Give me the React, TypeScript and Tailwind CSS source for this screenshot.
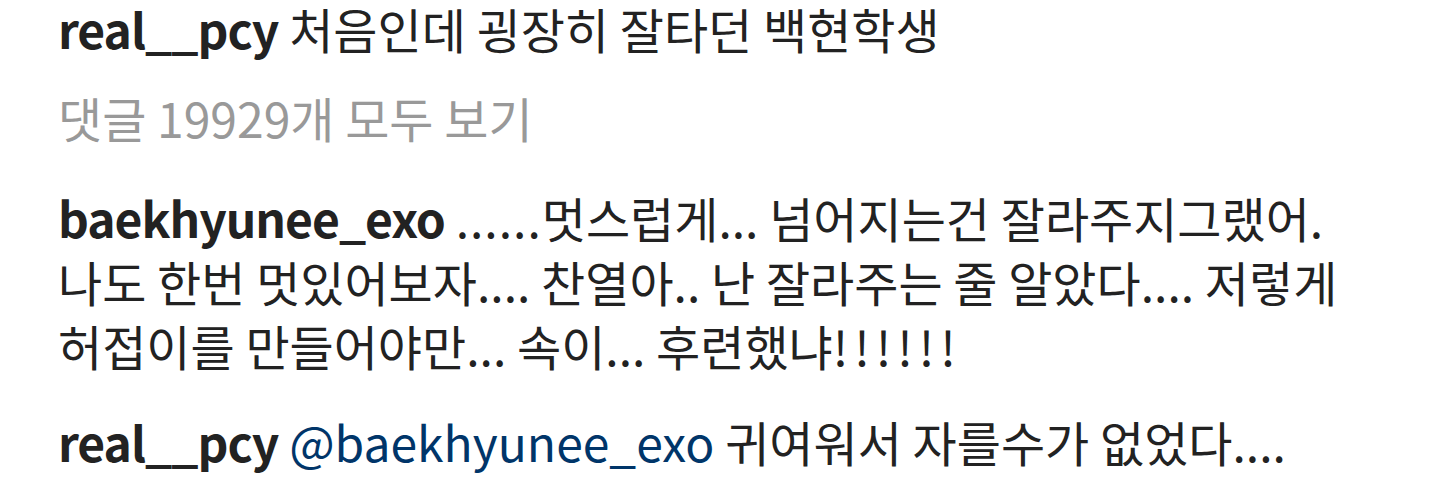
export default function App() {
  const font = { fontFamily: '"Noto Sans CJK KR", "Noto Sans", sans-serif' };
  return (
    <div className="w-[1440px] h-[480px] bg-white overflow-hidden text-[#222222]" style={font}>
      <div className="pl-[58px] pr-[40px] text-[48px] leading-[64px] break-keep">
        <p className="-mt-[4px]">
          <span className="font-bold tracking-[-1px]">real__pcy</span> 처음인데 굉장히 잘타던 백현학생
        </p>
        <p className="mt-[25px] text-[#999999]">댓글 19929개 모두 보기</p>
        <p className="mt-[36px]">
          <span className="font-bold tracking-[-1px]">baekhyunee_exo</span> <span className="tracking-[1px]">......</span>멋스럽게... 넘어지는건 잘라주지그랬어. 나도 한번 멋있어보자.... 찬열아.. 난 잘라주는 줄 알았다.... 저렇게 허접이를 만들어야만... 속이... 후련했냐<span className="tracking-[6px]">!!!!!!</span>
        </p>
        <p className="mt-[32px]">
          <span className="font-bold tracking-[-1px]">real__pcy</span>{" "}
          <span className="text-[#003569]">@baekhyunee_exo</span> 귀여워서 자를수가 없었다....
        </p>
      </div>
    </div>
  );
}
